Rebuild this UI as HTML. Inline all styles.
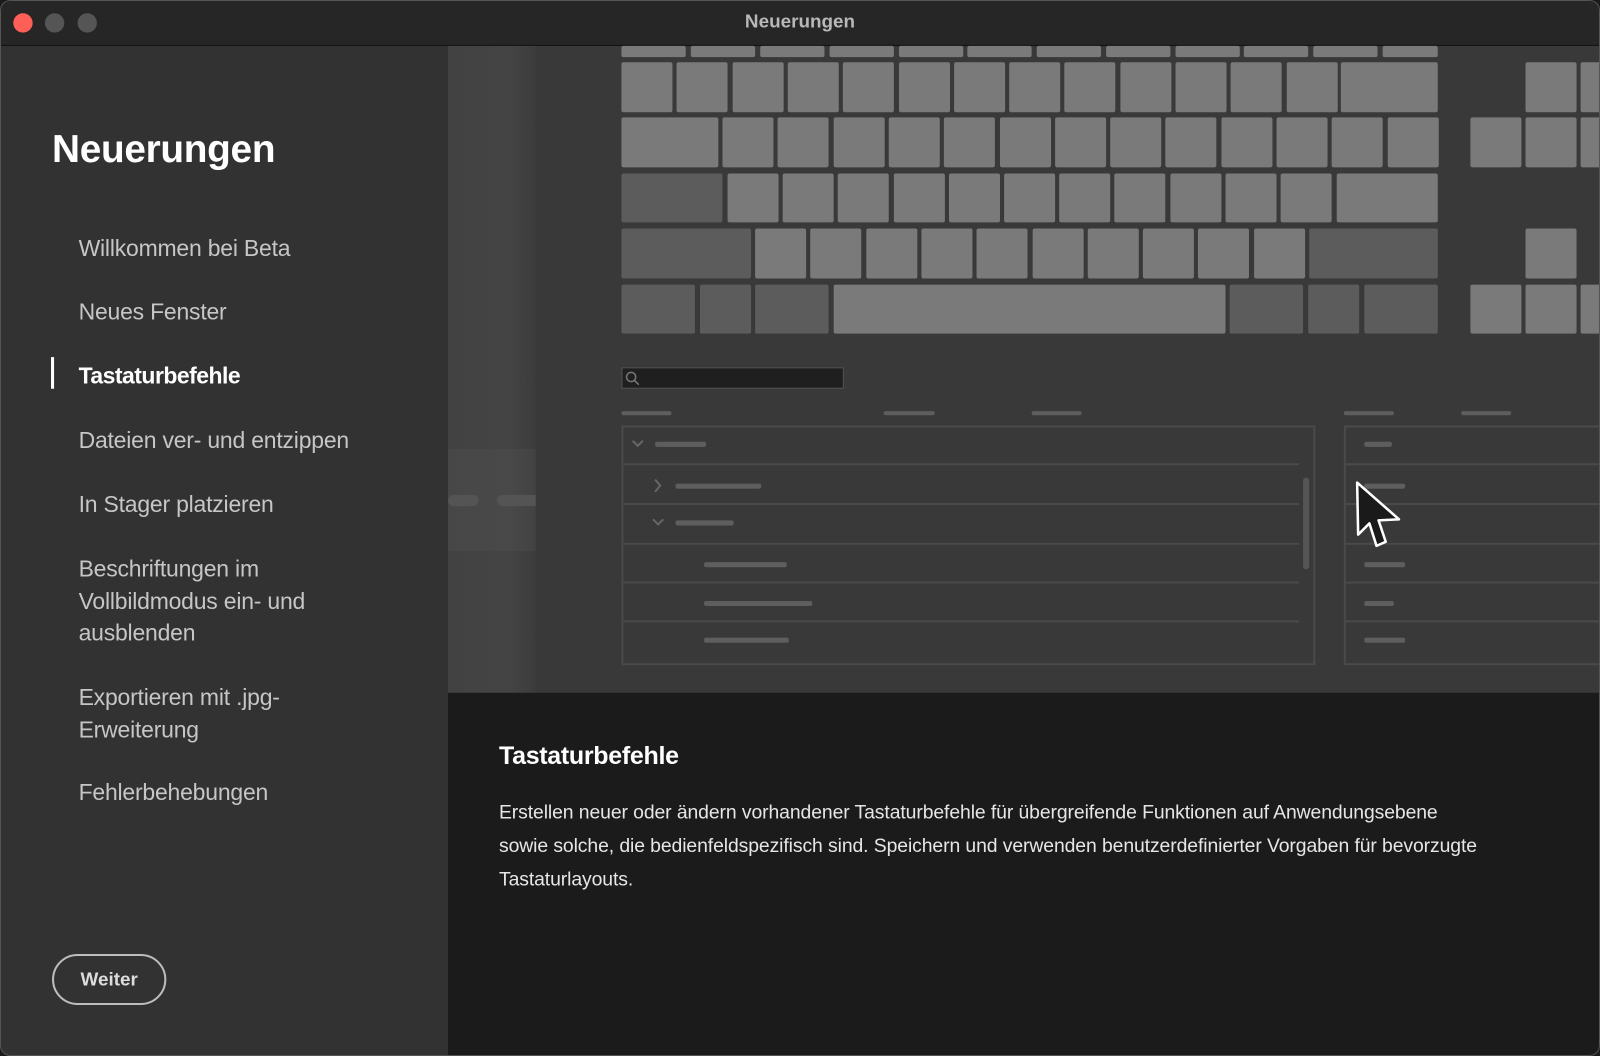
<!DOCTYPE html>
<html><head><meta charset="utf-8">
<style>
html,body{margin:0;padding:0;background:#1b1b1b;width:1600px;height:1056px;overflow:hidden}
#w{position:absolute;left:0;top:0;width:1568px;height:1035px;transform:scale(1.02041,1.02029);transform-origin:0 0;font-family:"Liberation Sans",sans-serif;background:#1b1b1b;border-radius:10px;overflow:hidden}
.a{position:absolute}
.k{position:absolute;background:#7a7a7a;border-radius:2px}
.d{background:#5c5c5c}
.dash{position:absolute;height:4px;background:#5e5e5e;border-radius:2px}
.nav{position:absolute;left:77px;color:#c6c6c6;font-size:22.5px;line-height:31.5px;letter-spacing:-0.2px}
.hl{position:absolute;left:611px;width:662px;height:2px;background:#4a4a4a}
.hr{position:absolute;left:1319px;width:260px;height:2px;background:#4a4a4a}
</style></head><body><div id="w">
<div class="a" style="left:0;top:0;width:1568px;height:44px;background:#262626;border-bottom:1px solid #101010"></div>
<div class="a" style="left:13px;top:13px;width:19px;height:19px;border-radius:50%;background:#fe5f57"></div>
<div class="a" style="left:44px;top:13px;width:19px;height:19px;border-radius:50%;background:#555"></div>
<div class="a" style="left:76px;top:13px;width:19px;height:19px;border-radius:50%;background:#555"></div>
<div class="a" style="left:0;width:1568px;top:10px;text-align:center;color:#b8b8b8;font-weight:bold;font-size:18.5px">Neuerungen</div>
<div class="a" style="left:0;top:45px;width:439px;height:990px;background:#323232"></div>
<div class="a" style="left:51px;top:126px;color:#fff;font-weight:bold;font-size:38px;letter-spacing:-0.3px">Neuerungen</div>
<div class="nav" style="top:228px">Willkommen bei Beta</div>
<div class="nav" style="top:290px">Neues Fenster</div>
<div class="a" style="left:50px;top:350px;width:3px;height:31px;background:#fff"></div>
<div class="nav" style="top:353px;color:#fff;font-weight:bold;letter-spacing:-0.5px">Tastaturbefehle</div>
<div class="nav" style="top:416px">Dateien ver- und entzippen</div>
<div class="nav" style="top:479px">In Stager platzieren</div>
<div class="nav" style="top:542px">Beschriftungen im<br>Vollbildmodus ein- und<br>ausblenden</div>
<div class="nav" style="top:668px">Exportieren mit .jpg-<br>Erweiterung</div>
<div class="nav" style="top:761px">Fehlerbehebungen</div>
<div class="a" style="left:51px;top:935px;width:108px;height:46px;border:2px solid #bdbdbd;border-radius:25px;color:#ddd;font-weight:bold;font-size:18.5px;line-height:46px;text-align:center">Weiter</div>
<div class="a" style="left:439px;top:45px;width:1129px;height:634px;background:#393939;overflow:hidden">
 <div class="a" style="left:0;top:0;width:86px;height:634px;background:linear-gradient(90deg,#424242 0,#444 70%,#3c3c3c 100%)"></div>
 <div class="a" style="left:0;top:395px;width:86px;height:100px;background:rgba(255,255,255,0.03)"></div>
 <div class="a" style="left:0;top:440px;width:30px;height:11px;border-radius:6px;background:#545454"></div>
 <div class="a" style="left:48px;top:440px;width:38px;height:11px;border-radius:6px 0 0 6px;background:#545454"></div>
</div>
<div id="kb"></div>
<div class="a" style="left:609px;top:360px;width:216px;height:19px;background:#1f1f1f;border:1px solid #555"></div>
<svg class="a" style="left:612px;top:363px" width="16" height="16"><circle cx="6.5" cy="6.5" r="4.5" fill="none" stroke="#777" stroke-width="1.5"/><line x1="10" y1="10" x2="14" y2="14" stroke="#777" stroke-width="1.5"/></svg>
<div class="dash" style="left:609px;top:403px;width:49px"></div>
<div class="dash" style="left:866px;top:403px;width:50px"></div>
<div class="dash" style="left:1011px;top:403px;width:49px"></div>
<div class="dash" style="left:1317px;top:403px;width:49px"></div>
<div class="dash" style="left:1432px;top:403px;width:49px"></div>
<div class="a" style="left:609px;top:417px;width:676px;height:231px;border:2px solid #4a4a4a"></div>
<div class="a" style="left:1317px;top:417px;width:260px;height:231px;border:2px solid #4a4a4a"></div>
<div class="hl" style="top:454px"></div><div class="hl" style="top:493px"></div><div class="hl" style="top:532px"></div><div class="hl" style="top:570px"></div><div class="hl" style="top:608px"></div>
<div class="hr" style="top:454px"></div><div class="hr" style="top:493px"></div><div class="hr" style="top:532px"></div><div class="hr" style="top:570px"></div><div class="hr" style="top:608px"></div>
<div class="a" style="left:1277px;top:468px;width:6px;height:90px;border-radius:3px;background:#555"></div>
<svg class="a" style="left:618px;top:429px" width="14" height="12"><polyline points="2,3 7,8 12,3" fill="none" stroke="#666" stroke-width="2"/></svg>
<svg class="a" style="left:639px;top:468px" width="12" height="16"><polyline points="3,2 8,8 3,14" fill="none" stroke="#666" stroke-width="2"/></svg>
<svg class="a" style="left:638px;top:506px" width="14" height="12"><polyline points="2,3 7,8 12,3" fill="none" stroke="#666" stroke-width="2"/></svg>
<div class="dash" style="left:642px;top:433px;width:50px;height:5px"></div>
<div class="dash" style="left:662px;top:474px;width:84px;height:5px"></div>
<div class="dash" style="left:662px;top:510px;width:57px;height:5px"></div>
<div class="dash" style="left:690px;top:551px;width:81px;height:5px"></div>
<div class="dash" style="left:690px;top:589px;width:106px;height:5px"></div>
<div class="dash" style="left:690px;top:625px;width:83px;height:5px"></div>
<div class="dash" style="left:1337px;top:433px;width:27px;height:5px"></div>
<div class="dash" style="left:1337px;top:474px;width:40px;height:5px"></div>
<div class="dash" style="left:1337px;top:551px;width:40px;height:5px"></div>
<div class="dash" style="left:1337px;top:589px;width:29px;height:5px"></div>
<div class="dash" style="left:1337px;top:625px;width:40px;height:5px"></div>
<svg class="a" style="left:1324px;top:468px" width="56" height="74"><path d="M6 5 L7 56 L18 45 L25 67 L34 63 L27 42 L47 41 Z" fill="#1a1a1a" stroke="#fff" stroke-width="2.5" stroke-linejoin="round"/></svg>
<div class="a" style="left:489px;top:728px;color:#fff;font-weight:bold;font-size:24.5px;letter-spacing:-0.3px">Tastaturbefehle</div>
<div class="a" style="left:489px;top:780px;white-space:nowrap;color:#e6e6e6;font-size:19px;line-height:33px;letter-spacing:-0.1px">Erstellen neuer oder ändern vorhandener Tastaturbefehle für übergreifende Funktionen auf Anwendungsebene<br>sowie solche, die bedienfeldspezifisch sind. Speichern und verwenden benutzerdefinierter Vorgaben für bevorzugte<br>Tastaturlayouts.</div>
<div class="a" style="left:0;top:0;width:1566px;height:1033px;border:1px solid #555;border-radius:10px;pointer-events:none"></div>
</div>
<script>
var w=document.getElementById('w'),h='';
function k(x1,x2,y1,y2,d){h+='<div class="k'+(d?' d':'')+'" style="left:'+x1+'px;top:'+y1+'px;width:'+(x2-x1)+'px;height:'+(y2-y1)+'px"></div>';}
[609,677,745,813,881,948,1016,1084,1152,1219,1287].forEach(function(x){k(x,x+63,45,56)});k(1355,1409,45,56);
for(var i=0;i<13;i++){var x=609+i*54.3;k(x,x+50,61,110)}k(1314,1409,61,110);k(1495,1545,61,110);k(1549,1600,61,110);
k(609,704,115,164);for(i=0;i<13;i++){x=708+i*54.3;k(x,x+50,115,164)}k(1441,1491,115,164);k(1495,1545,115,164);k(1549,1600,115,164);
k(609,708,170,218,1);for(i=0;i<11;i++){x=713+i*54.2;k(x,x+50,170,218)}k(1310,1409,170,218);
k(609,736,224,273,1);for(i=0;i<10;i++){x=740+i*54.3;k(x,x+50,224,273)}k(1283,1409,224,273,1);k(1495,1545,224,273);
k(609,681,279,327,1);k(686,736,279,327,1);k(740,812,279,327,1);k(817,1201,279,327);k(1205,1277,279,327,1);k(1282,1332,279,327,1);k(1337,1409,279,327,1);
k(1441,1491,279,327);k(1495,1545,279,327);k(1549,1600,279,327);
document.getElementById('kb').outerHTML=h;
</script>
</body></html>
